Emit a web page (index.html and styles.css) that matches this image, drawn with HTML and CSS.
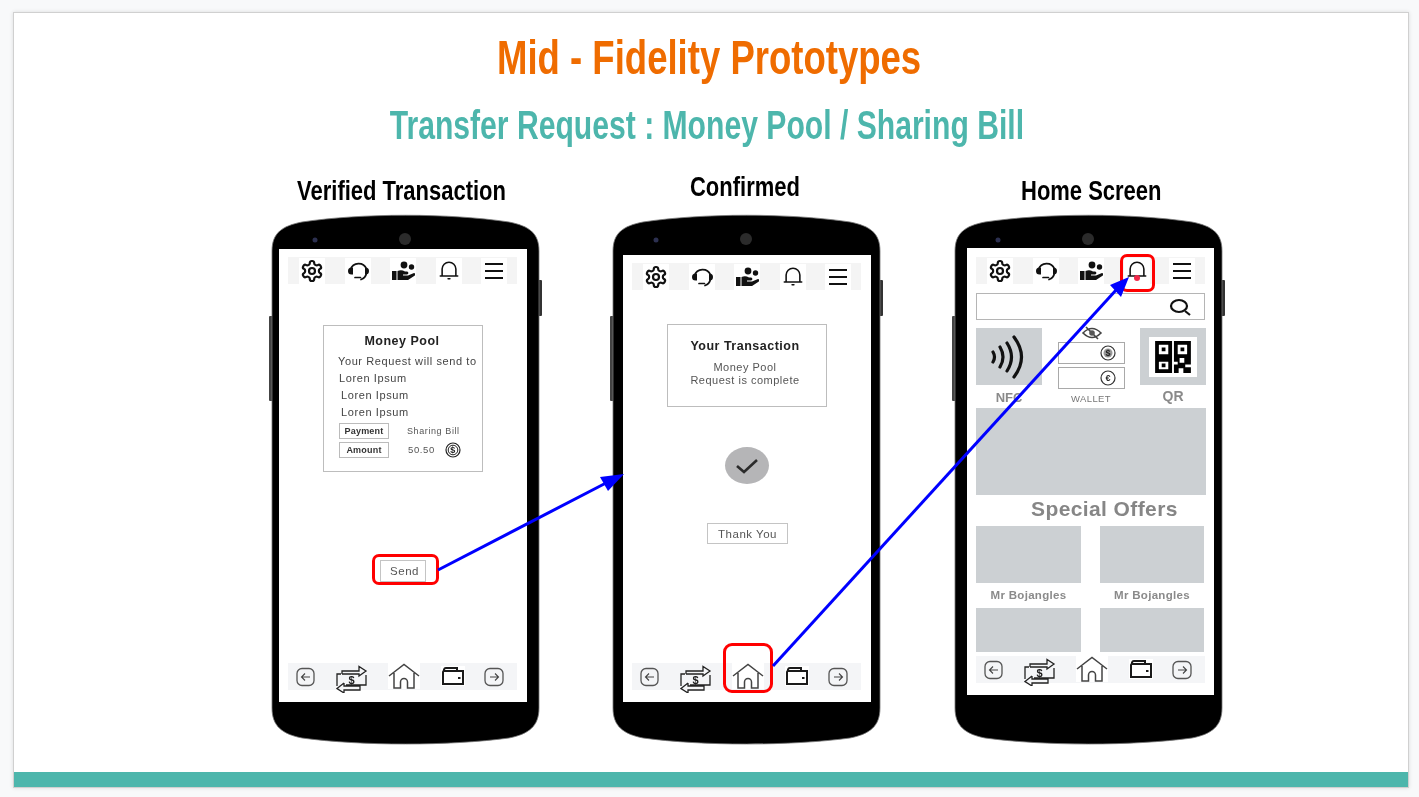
FILE: index.html
```html
<!DOCTYPE html>
<html lang="en">
<head>
    <meta charset="UTF-8">
    <title>Mid - Fidelity Prototypes</title>
    <link rel="stylesheet" href="styles.css">
</head>
<body>
    <!-- shared icons -->
    <svg class="defs" width="0" height="0">
        <symbol id="body" viewBox="0 0 273 533">
            <rect x="0" y="103" width="5" height="85" rx="1" fill="#444"/>
            <rect x="268" y="67" width="5" height="36" rx="1" fill="#333"/>
            <path d="M3 38C3 20 13 13 33 9C93 0 180 0 240 9C260 13 270 20 270 38L270 495C270 513 260 521 240 525C180 533 93 533 33 525C13 521 3 513 3 495Z" fill="#000" stroke="#777" stroke-width=".8"/>
            <circle cx="136" cy="26" r="6" fill="#2b2b2b"/>
            <circle cx="46" cy="27" r="2.5" fill="#2c3050"/>
        </symbol>
        <symbol id="gear" viewBox="0 0 24 24">
            <path d="M12.22 2h-.44a2 2 0 0 0-2 2v.18a2 2 0 0 1-1 1.73l-.43.25a2 2 0 0 1-2 0l-.15-.08a2 2 0 0 0-2.73.73l-.22.38a2 2 0 0 0 .73 2.73l.15.1a2 2 0 0 1 1 1.72v.51a2 2 0 0 1-1 1.74l-.15.09a2 2 0 0 0-.73 2.73l.22.38a2 2 0 0 0 2.73.73l.15-.08a2 2 0 0 1 2 0l.43.25a2 2 0 0 1 1 1.73V20a2 2 0 0 0 2 2h.44a2 2 0 0 0 2-2v-.18a2 2 0 0 1 1-1.73l.43-.25a2 2 0 0 1 2 0l.15.08a2 2 0 0 0 2.73-.73l.22-.39a2 2 0 0 0-.73-2.73l-.15-.08a2 2 0 0 1-1-1.74v-.5a2 2 0 0 1 1-1.74l.15-.09a2 2 0 0 0 .73-2.73l-.22-.38a2 2 0 0 0-2.73-.73l-.15.08a2 2 0 0 1-2 0l-.43-.25a2 2 0 0 1-1-1.73V4a2 2 0 0 0-2-2z" fill="none" stroke="#111" stroke-width="2.200"/>
            <circle cx="12" cy="12" r="3" fill="none" stroke="#111" stroke-width="2.200"/>
        </symbol>
        <symbol id="headset" viewBox="0 0 24 24">
            <path d="M4.500 10.500A8.500 8.500 0 0 1 20.500 10M20.500 14A8.500 8.500 0 0 1 15 20.500M9 18.500h5.500" fill="none" stroke="#111" stroke-width="1.700" stroke-linecap="round"/>
            <path d="M7 8.500v7H5.500a3.500 3.500 0 0 1 0-7zM19 8.500h.5a3.500 3.500 0 0 1 0 7H19z" fill="#111"/>
        </symbol>
        <symbol id="people" viewBox="0 0 24 24">
            <g transform="translate(1 0)">
                <circle cx="12" cy="6" r="3.400" fill="#111"/>
                <circle cx="19.500" cy="8" r="2.700" fill="#111"/>
                <path d="M0 12h4.500v9H0zM5.500 12c3-1 5-.8 7.500.5h2c1.800 0 1.800 3 0 3h-4v1h5l6-2.500c1.500 0 1.500 2 .5 2.800L16 21H5.500z" fill="#111"/>
            </g>
        </symbol>
        <symbol id="bell" viewBox="0 0 24 24">
            <path d="M2.500 18.500h19M4.500 18.500V11a7.500 7.500 0 0 1 15 0v7.500M11 21.500h2" fill="none" stroke="#111" stroke-width="1.700" stroke-linecap="round"/>
        </symbol>
        <symbol id="menu" viewBox="0 0 24 24">
            <path d="M3 5h18M3 12h18M3 19h18" fill="none" stroke="#111" stroke-width="2"/>
        </symbol>
        <symbol id="back" viewBox="0 0 20 20">
            <rect x="1" y="1.500" width="17" height="17" rx="5" fill="none" stroke="#555" stroke-width="1.300"/>
            <path d="M14 10H6M9 6.500L5.500 10L9 13.500" fill="none" stroke="#444" stroke-width="1.100"/>
        </symbol>
        <symbol id="forward" viewBox="0 0 20 20">
            <rect x="1" y="1.500" width="18" height="17" rx="5" fill="none" stroke="#555" stroke-width="1.300"/>
            <path d="M6 10h8M11 6.500L14.500 10L11 13.500" fill="none" stroke="#444" stroke-width="1.100"/>
        </symbol>
        <symbol id="arrows" viewBox="0 0 32 28">
            <path d="M1 21V9h4M6 9V6h17V1.500L30 6L23 11V9H6M30 10v10H10M8 18v3H24v4H8v3L1 23.500L8 18" fill="none" stroke="#222" stroke-width="1.300"/>
        </symbol>
        <symbol id="home" viewBox="0 0 32 26">
            <path d="M1 13L16 1.500L31 13M6 10V25H12.500V19a3.500 3.500 0 0 1 7 0V25H26V10" fill="none" stroke="#444" stroke-width="1.500"/>
        </symbol>
        <symbol id="wallet" viewBox="0 0 24 20">
            <path d="M3 5V3.500A2 2 0 0 1 5 2H16V5M2 6a1 1 0 0 1 1-1H22V18H2Z" fill="none" stroke="#1a1a1a" stroke-width="2"/>
            <rect x="17" y="11" width="2.500" height="2" fill="#1a1a1a"/>
        </symbol>
        <symbol id="search" viewBox="0 0 24 18">
            <ellipse cx="11" cy="8" rx="8" ry="6" fill="none" stroke="#111" stroke-width="2.200"/>
            <path d="M17 13l5 4" stroke="#111" stroke-width="2.200"/>
        </symbol>
    </svg>

    <div class="slide">
        <h1 class="title">Mid - Fidelity Prototypes</h1>
        <h2 class="subtitle">Transfer Request : Money Pool / Sharing Bill</h2>

        <div class="stage">
            <!-- phone 1 -->
            <section class="device device-a">
                <h3 class="label">Verified Transaction</h3>
                <div class="phone">
                    <svg class="shell"><use href="#body"/></svg>
                    <div class="screen">
                        <div class="bar top">
                            <svg class="ico"><use href="#gear"/></svg>
                            <svg class="ico"><use href="#headset"/></svg>
                            <svg class="ico"><use href="#people"/></svg>
                            <svg class="ico bell"><use href="#bell"/></svg>
                            <svg class="ico"><use href="#menu"/></svg>
                        </div>
                        <div class="card pool">
                            <div class="card-title">Money Pool</div>
                            <div class="line first">Your Request will send to</div>
                            <div class="line">Loren Ipsum</div>
                            <div class="line nudge">Loren Ipsum</div>
                            <div class="line nudge">Loren Ipsum</div>
                            <div class="field">
                                <span class="tag">Payment</span>
                                <span class="small">Sharing Bill</span>
                            </div>
                            <div class="field">
                                <span class="tag">Amount</span>
                                <span class="amount">50.50</span>
                                <svg class="coin" viewBox="0 0 16 16">
                                    <circle cx="8" cy="8" r="7" fill="none" stroke="#222" stroke-width="1.200"/>
                                    <circle cx="8" cy="8" r="4.800" fill="none" stroke="#222" stroke-width="1"/>
                                    <text x="8" y="11" class="cointext">$</text>
                                </svg>
                            </div>
                        </div>
                        <div class="btn send">Send<span class="ring ring-send"></span></div>
                        <div class="bar bottom">
                            <svg class="b-back"><use href="#back"/></svg>
                            <svg class="b-transfer" viewBox="0 0 32 28"><use href="#arrows"/><text x="15.500" y="18.500" class="dollar">$</text></svg>
                            <svg class="b-home"><use href="#home"/></svg>
                            <svg class="b-wallet"><use href="#wallet"/></svg>
                            <svg class="b-forward"><use href="#forward"/></svg>
                        </div>
                    </div>
                </div>
            </section>

            <!-- phone 2 -->
            <section class="device device-b">
                <h3 class="label">Confirmed</h3>
                <div class="phone">
                    <svg class="shell"><use href="#body"/></svg>
                    <div class="screen">
                        <div class="bar top">
                            <svg class="ico"><use href="#gear"/></svg>
                            <svg class="ico"><use href="#headset"/></svg>
                            <svg class="ico"><use href="#people"/></svg>
                            <svg class="ico bell"><use href="#bell"/></svg>
                            <svg class="ico"><use href="#menu"/></svg>
                        </div>
                        <div class="card done">
                            <div class="card-title">Your Transaction</div>
                            <div class="done-text">Money Pool<br>Request is complete</div>
                        </div>
                        <div class="check">
                            <svg width="24" height="16" viewBox="0 0 24 16"><path d="M2 8l7 6L22 2" fill="none" stroke="#2b2b2b" stroke-width="2.600"/></svg>
                        </div>
                        <div class="btn thanks">Thank You</div>
                        <div class="bar bottom">
                            <svg class="b-back"><use href="#back"/></svg>
                            <svg class="b-transfer" viewBox="0 0 32 28"><use href="#arrows"/><text x="15.500" y="18.500" class="dollar">$</text></svg>
                            <div class="b-home-wrap">
                                <svg class="b-home"><use href="#home"/></svg>
                                <span class="ring ring-home"></span>
                            </div>
                            <svg class="b-wallet"><use href="#wallet"/></svg>
                            <svg class="b-forward"><use href="#forward"/></svg>
                        </div>
                    </div>
                </div>
            </section>

            <!-- phone 3 -->
            <section class="device device-c">
                <h3 class="label">Home Screen</h3>
                <div class="phone">
                    <svg class="shell"><use href="#body"/></svg>
                    <div class="screen">
                        <div class="bar top">
                            <svg class="ico"><use href="#gear"/></svg>
                            <svg class="ico"><use href="#headset"/></svg>
                            <svg class="ico"><use href="#people"/></svg>
                            <div class="bell-wrap">
                                <svg class="ico bell"><use href="#bell"/></svg>
                                <span class="dot"></span>
                                <span class="ring ring-bell"></span>
                            </div>
                            <svg class="ico"><use href="#menu"/></svg>
                        </div>
                        <div class="searchbox">
                            <svg width="24" height="18"><use href="#search"/></svg>
                        </div>
                        <div class="quick">
                            <div class="quick-col">
                                <div class="tile">
                                    <svg width="38" height="44" viewBox="0 0 38 44">
                                        <path d="M3 17q3 5 0 10M10 12q6 10 0 20M17 8q9 14 0 28M24 2q15 20 0 40" fill="none" stroke="#111" stroke-width="3.200" stroke-linecap="round"/>
                                    </svg>
                                </div>
                                <div class="quick-label nfc">NFC</div>
                            </div>
                            <div class="quick-col wallet-col">
                                <svg class="eye" width="20" height="14" viewBox="0 0 20 14">
                                    <path d="M1 7q9-9 18 0q-9 9-18 0zM4 1l12 12" fill="none" stroke="#444" stroke-width="1.600"/>
                                    <circle cx="10" cy="7" r="2.800" fill="#555"/>
                                </svg>
                                <div class="purse">
                                    <svg width="16" height="16" viewBox="0 0 16 16">
                                        <circle cx="8" cy="8" r="7" fill="none" stroke="#333" stroke-width="1.200"/>
                                        <circle cx="8" cy="8" r="4.500" fill="#999"/>
                                        <text x="8" y="11" class="cointext">$</text>
                                    </svg>
                                </div>
                                <div class="purse">
                                    <svg width="16" height="16" viewBox="0 0 16 16">
                                        <circle cx="8" cy="8" r="7" fill="none" stroke="#333" stroke-width="1.200"/>
                                        <text x="8" y="11" class="cointext">€</text>
                                    </svg>
                                </div>
                                <div class="quick-label wallet-label">WALLET</div>
                            </div>
                            <div class="quick-col">
                                <div class="tile">
                                    <div class="qr-back">
                                        <svg width="38" height="32" viewBox="0 0 38 34">
                                            <path d="M2 2h14v14H2zM22 2h14v14H22zM2 20h14v12H2z" fill="none" stroke="#000" stroke-width="4"/>
                                            <path d="M7 7h4v4H7zM27 7h4v4h-4zM7 24h4v4H7zM20 18h6v5h5v-5h7v7h-6v3h6v6h-8v-5h-5v5h-5v-9h4v-3h-4z" fill="#000"/>
                                        </svg>
                                    </div>
                                </div>
                                <div class="quick-label qr">QR</div>
                            </div>
                        </div>
                        <div class="banner"></div>
                        <div class="offers-title">Special Offers</div>
                        <div class="offers">
                            <div class="offer">
                                <div class="thumb"></div>
                                <div class="offer-name">Mr Bojangles</div>
                            </div>
                            <div class="offer">
                                <div class="thumb"></div>
                                <div class="offer-name">Mr Bojangles</div>
                            </div>
                            <div class="thumb short"></div>
                            <div class="thumb short"></div>
                        </div>
                        <div class="bar bottom">
                            <svg class="b-back"><use href="#back"/></svg>
                            <svg class="b-transfer" viewBox="0 0 32 28"><use href="#arrows"/><text x="15.500" y="18.500" class="dollar">$</text></svg>
                            <svg class="b-home"><use href="#home"/></svg>
                            <svg class="b-wallet"><use href="#wallet"/></svg>
                            <svg class="b-forward"><use href="#forward"/></svg>
                        </div>
                    </div>
                </div>
            </section>
        </div>

        <div class="footer"></div>
    </div>

    <!-- arrows between the screens, page coordinates -->
    <svg class="arrows" width="1419" height="797" viewBox="0 0 1419 797">
        <path d="M438 570L606 483" stroke="#0000ff" stroke-width="3" fill="none"/>
        <path d="M624 474L600 477L608 491Z" fill="#0000ff"/>
        <path d="M773 666L1117 289" stroke="#0000ff" stroke-width="3" fill="none"/>
        <path d="M1129 277L1110 285L1121 297Z" fill="#0000ff"/>
    </svg>
</body>
</html>
```

FILE: styles.css
```css
* {
    box-sizing: border-box;
}

body {
    margin: 0;
    height: 797px;
    position: relative;
    overflow: hidden;
    background-color: #f8f9fa;
    font-family: "Liberation Sans", Arial, sans-serif;
}

.defs {
    position: absolute;
}

.slide {
    width: 1396px;
    height: 776px;
    margin: 12px 0 0 13px;
    display: flex;
    flex-direction: column;
    background-color: #fff;
    border: 1px solid #d0d0d0;
    box-shadow: 0 0 4px rgba(0, 0, 0, 0.12);
}

/* no narrow font installed, so the headings get squeezed */
.title,
.subtitle,
.label {
    margin: 0;
    text-align: center;
    font-weight: bold;
    white-space: nowrap;
}

.title {
    height: 74px;
    padding: 15px 5px 0 0;
    font-size: 48px;
    line-height: 60px;
    color: #ef6c00;
    transform: scaleX(0.761);
}

.subtitle {
    height: 50px;
    margin-top: 13px;
    padding-right: 11px;
    font-size: 40px;
    line-height: 50px;
    color: #4db6ac;
    transform: scaleX(0.753);
}

.stage {
    display: flex;
    gap: 68px;
    padding-left: 255px;
    flex: 1;
}

.device {
    width: 273px;
    flex-shrink: 0;
}

.device-c {
    margin-left: 1px;
}

.label {
    width: 273px;
    height: 40px;
    margin-top: 23px;
    font-size: 28px;
    line-height: 36px;
    color: #000;
    transform: scaleX(0.785);
}

.device-a .label { margin-left: -4px; }
.device-b .label { padding-right: 4px; margin-top: 19px; margin-bottom: 4px; }
.device-c .label { padding-left: 7px; }

.phone {
    position: relative;
    width: 273px;
    height: 533px;
    padding-top: 0.1px;
}

.shell {
    position: absolute;
    top: 0;
    left: 0;
    width: 273px;
    height: 533px;
}

.screen {
    position: relative;
    display: flex;
    flex-direction: column;
    background-color: #fff;
    filter: blur(0.35px);
}

.device-a .screen { width: 248px; height: 453px; margin: 36px 0 0 10px; }
.device-b .screen { width: 248px; height: 447px; margin: 42px 0 0 13px; }
.device-c .screen { width: 247px; height: 447px; margin: 35px 0 0 15px; }

.bar {
    width: 229px;
    height: 27px;
    display: flex;
    align-items: center;
    flex-shrink: 0;
}

.top {
    margin: 8px 0 0 9px;
    padding: 0 10px 0 11px;
    justify-content: space-between;
    background-color: #f4f4f4;
}

.device-c .top {
    margin-top: 9px;
}

.bottom {
    margin: auto 0 12px 9px;
    padding-left: 8px;
    background-color: #f4f5f7;
}

.ico {
    width: 26px;
    height: 26px;
    padding: 1px;
    background-color: #fff;
}

.bell {
    padding: 1px 2px 3px;
}

.b-back { width: 20px; height: 20px; }
.b-transfer { width: 32px; height: 28px; margin: 4px 0 0 20px; }
.b-home { width: 32px; height: 26px; background-color: #fff; display: block; }
.b-transfer + .b-home { margin: -2px 0 0 20px; }
.b-wallet { width: 24px; height: 20px; margin: -1px 0 0 21px; background-color: #fff; }
.b-forward { width: 20px; height: 20px; margin-left: 19px; }

.b-home-wrap {
    position: relative;
    margin: -2px 0 0 20px;
}

.dollar {
    font: bold 11px "Liberation Sans", sans-serif;
    text-anchor: middle;
    fill: #222;
}

.cointext {
    font: bold 9px "Liberation Sans", sans-serif;
    text-anchor: middle;
    fill: #222;
}

.ring {
    position: absolute;
    border: 3px solid #ff0000;
    border-radius: 7px;
    pointer-events: none;
}

.ring-send { top: -7px; left: -9px; width: 67px; height: 31px; }
.ring-home { top: -20px; left: -9px; width: 50px; height: 50px; border-radius: 9px; }
.ring-bell { top: -4px; left: -4px; width: 35px; height: 38px; }

.card {
    margin-left: 44px;
    width: 160px;
    border: 1px solid #bdbdbd;
    color: #444;
}

.pool {
    height: 147px;
    margin-top: 41px;
    padding: 8px 0 0 14px;
    font-size: 11px;
    letter-spacing: 0.6px;
}

.card-title {
    font-weight: bold;
    font-size: 12.500px;
    letter-spacing: 0.5px;
    color: #222;
    text-align: center;
}

.pool .card-title {
    padding-right: 16px;
    height: 19px;
}

.line {
    height: 17px;
    line-height: 17px;
    white-space: nowrap;
    padding-left: 1px;
}

.line.first {
    padding-left: 0;
}

.line.nudge {
    padding-left: 3px;
}

.field {
    display: flex;
    align-items: center;
    height: 19px;
    padding-left: 1px;
}

.tag {
    width: 50px;
    height: 16px;
    border: 1px solid #bbb;
    text-align: center;
    font-weight: bold;
    font-size: 9px;
    line-height: 14px;
    letter-spacing: 0.2px;
    color: #333;
}

.small {
    margin-left: 18px;
    font-size: 9px;
    color: #555;
}

.amount {
    margin-left: 19px;
    font-size: 9.500px;
    color: #555;
}

.coin {
    width: 16px;
    height: 16px;
    margin-left: 10px;
}

.btn {
    position: relative;
    border: 1px solid #c4c4c4;
    text-align: center;
    font-size: 11.500px;
    letter-spacing: 0.5px;
    color: #555;
}

.send {
    width: 46px;
    height: 22px;
    padding-left: 3px;
    line-height: 20px;
    margin: 88px 0 0 101px;
}

.done {
    height: 83px;
    margin-top: 34px;
    padding: 14px 4px 0 0;
}

.done-text {
    margin-top: 8px;
    font-size: 11px;
    line-height: 13px;
    letter-spacing: 0.5px;
    text-align: center;
    color: #555;
}

.check {
    width: 44px;
    height: 37px;
    margin: 40px 0 0 102px;
    display: flex;
    align-items: center;
    justify-content: center;
    border-radius: 50%;
    background-color: #b5b5b7;
}

.thanks {
    width: 81px;
    height: 21px;
    line-height: 20px;
    margin: 39px 0 0 84px;
}

.bell-wrap {
    position: relative;
    height: 26px;
}

.dot {
    position: absolute;
    top: 17px;
    left: 10px;
    width: 6px;
    height: 6px;
    border-radius: 50%;
    background-color: #f0284a;
}

.searchbox {
    width: 229px;
    height: 27px;
    margin: 9px 0 0 9px;
    padding: 4px 12px 0 0;
    display: flex;
    justify-content: flex-end;
    border: 1px solid #b5b5b5;
    flex-shrink: 0;
}

.quick {
    width: 230px;
    height: 80px;
    margin: 8px 0 0 9px;
    display: flex;
    justify-content: space-between;
    flex-shrink: 0;
}

.quick-col {
    width: 66px;
    display: flex;
    flex-direction: column;
    align-items: center;
}

.wallet-col {
    position: relative;
    width: 67px;
    padding-top: 14px;
}

.tile {
    width: 66px;
    height: 57px;
    display: flex;
    align-items: center;
    justify-content: center;
    background-color: #ccd0d3;
}

.qr-back {
    width: 48px;
    height: 40px;
    display: flex;
    align-items: center;
    justify-content: center;
    background-color: #fff;
}

.eye {
    position: absolute;
    top: -2px;
    left: 24px;
}

.purse {
    width: 67px;
    height: 22px;
    margin-bottom: 3px;
    padding: 2px 8px 0 0;
    display: flex;
    justify-content: flex-end;
    border: 1px solid #a9a9a9;
    flex-shrink: 0;
}

.quick-label {
    font-weight: bold;
    color: #8a8a8a;
    text-align: center;
}

.nfc { margin-top: 5px; font-size: 13px; }
.qr { margin-top: 3px; font-size: 14px; }
.wallet-label { margin-top: 1px; font-size: 9.500px; font-weight: normal; letter-spacing: 0.4px; color: #777; }

.banner {
    width: 230px;
    height: 87px;
    margin-left: 9px;
    flex-shrink: 0;
    background-color: #ccd0d3;
}

.offers-title {
    height: 31px;
    padding-left: 64px;
    font-size: 21px;
    line-height: 28px;
    letter-spacing: 0.4px;
    font-weight: bold;
    color: #868686;
    white-space: nowrap;
    flex-shrink: 0;
}

.offers {
    display: grid;
    grid-template-columns: 105px 104px;
    column-gap: 19px;
    margin-left: 9px;
}

.thumb {
    height: 57px;
    background-color: #ccd0d3;
}

.thumb.short {
    height: 44px;
}

.offer-name {
    height: 25px;
    font-size: 11.500px;
    line-height: 25px;
    font-weight: bold;
    letter-spacing: 0.3px;
    text-align: center;
    color: #8a8a8a;
    white-space: nowrap;
}

.footer {
    height: 15px;
    margin-top: auto;
    background-color: #4db6ac;
    flex-shrink: 0;
}

.arrows {
    position: absolute;
    top: 0;
    left: 0;
}
```
